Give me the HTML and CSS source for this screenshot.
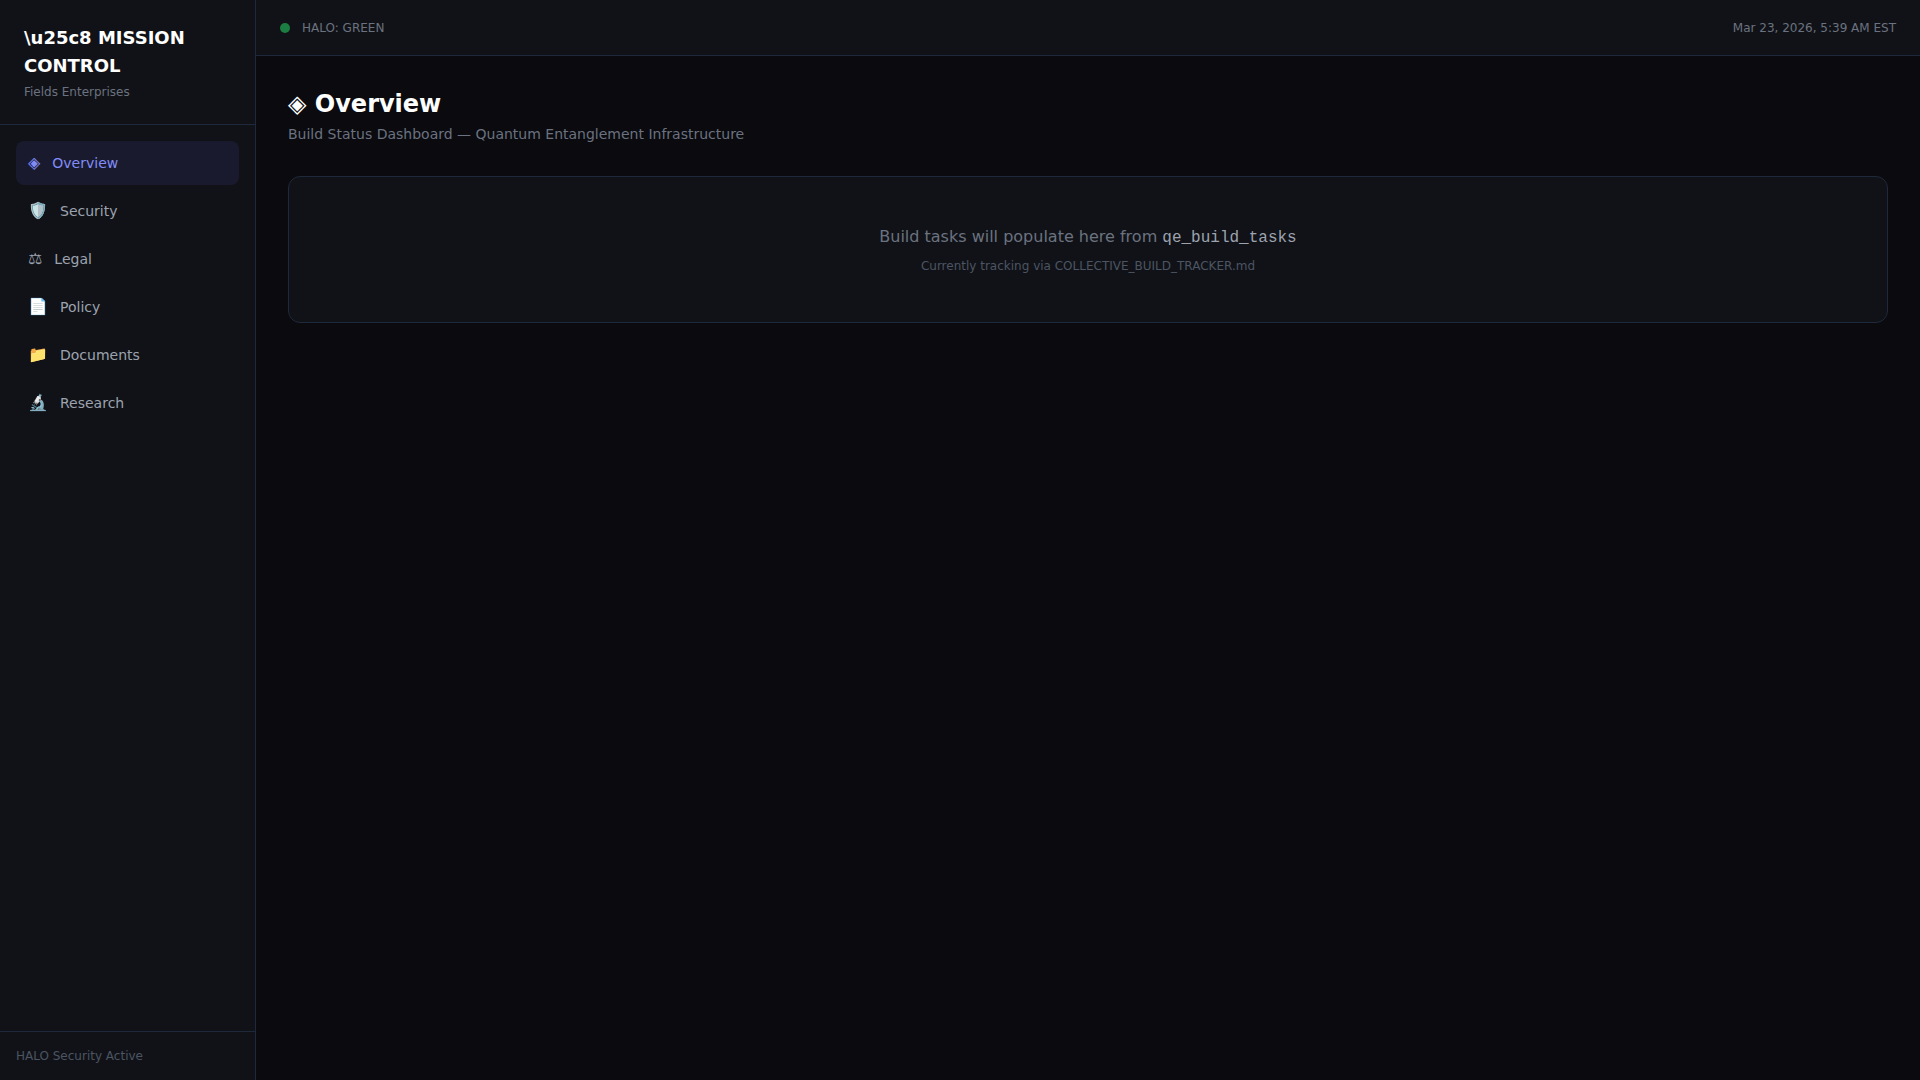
FILE: index.html
```html
<!DOCTYPE html>
<html lang="en">
<head>
<meta charset="utf-8">
<meta name="viewport" content="width=device-width, initial-scale=1">
<title>Mission Control</title>
<link rel="stylesheet" href="styles.css">
</head>
<body>
<div class="app">
  <aside class="sidebar">
    <div class="brand">
      <h1 class="brand-title">\u25c8 MISSION CONTROL</h1>
      <p class="brand-sub">Fields Enterprises</p>
    </div>
    <nav class="nav">
      <a class="nav-link active" href="#overview"><span class="nav-icon">◈</span><span>Overview</span></a>
      <a class="nav-link" href="#security"><span class="nav-icon">🛡️</span><span>Security</span></a>
      <a class="nav-link" href="#legal"><span class="nav-icon">⚖</span><span>Legal</span></a>
      <a class="nav-link" href="#policy"><span class="nav-icon">📄</span><span>Policy</span></a>
      <a class="nav-link" href="#documents"><span class="nav-icon">📁</span><span>Documents</span></a>
      <a class="nav-link" href="#research"><span class="nav-icon">🔬</span><span>Research</span></a>
    </nav>
    <div class="sidebar-foot">HALO Security Active</div>
  </aside>
  <div class="content">
    <header class="topbar">
      <div class="status"><span class="status-dot"></span><span>HALO: GREEN</span></div>
      <time datetime="2026-03-23T05:39">Mar 23, 2026, 5:39 AM EST</time>
    </header>
    <main class="main">
      <h2 class="page-title">◈ Overview</h2>
      <p class="page-sub">Build Status Dashboard — Quantum Entanglement Infrastructure</p>
      <section class="card">
        <p class="card-text">Build tasks will populate here from <code>qe_build_tasks</code></p>
        <p class="card-note">Currently tracking via COLLECTIVE_BUILD_TRACKER.md</p>
      </section>
    </main>
  </div>
</div>
</body>
</html>
```
FILE: styles.css
```css
* { box-sizing: border-box; margin: 0; padding: 0; }
body {
  background: #0a0a0f;
  color: #e5e7eb;
  font-family: "DejaVu Sans", sans-serif;
  font-size: 16px;
  line-height: 24px;
}
.app { display: flex; min-height: 100vh; }
.sidebar {
  display: flex;
  flex-direction: column;
  flex: none;
  width: 256px;
  background: #111217;
  border-right: 1px solid #1e293b;
}
.brand { padding: 24px; border-bottom: 1px solid #1e293b; }
.brand-title { font-size: 18px; line-height: 28px; font-weight: 700; color: #fff; }
.brand-sub { margin-top: 4px; font-size: 12px; line-height: 16px; color: #6b7280; }
.nav { display: flex; flex-direction: column; flex: 1; gap: 4px; padding: 16px; }
.nav-link {
  display: flex;
  align-items: center;
  gap: 12px;
  padding: 10px 12px;
  border-radius: 8px;
  font-size: 14px;
  line-height: 20px;
  color: #9ca3af;
  text-decoration: none;
}
.nav-icon { font-size: 16px; line-height: 24px; }
.active { background: #1a1a2e; color: #818cf8; }
.sidebar-foot {
  padding: 16px;
  border-top: 1px solid #1e293b;
  font-size: 12px;
  line-height: 16px;
  color: #4b5563;
}
.content { flex: 1; min-width: 0; }
.topbar {
  display: flex;
  align-items: center;
  justify-content: space-between;
  height: 56px;
  padding: 0 24px;
  background: #111217;
  border-bottom: 1px solid #1e293b;
  font-size: 12px;
  line-height: 16px;
  color: #6b7280;
}
.status { display: flex; align-items: center; gap: 12px; }
.status-dot { width: 10px; height: 10px; border-radius: 50%; background: #1b7d41; }
.main { padding: 32px; }
.page-title { font-size: 24px; line-height: 32px; font-weight: 700; color: #fff; }
.page-sub { margin-top: 4px; font-size: 14px; line-height: 20px; color: #6b7280; }
.card {
  margin-top: 32px;
  padding: 48px;
  background: #111217;
  border: 1px solid #1e293b;
  border-radius: 12px;
  text-align: center;
}
.card-text { color: #6b7280; }
.card-text code { font-family: "Liberation Mono", monospace; font-size: 16px; color: #9ca3af; }
.card-note { margin-top: 8px; font-size: 12px; line-height: 16px; color: #4b5563; }
```
